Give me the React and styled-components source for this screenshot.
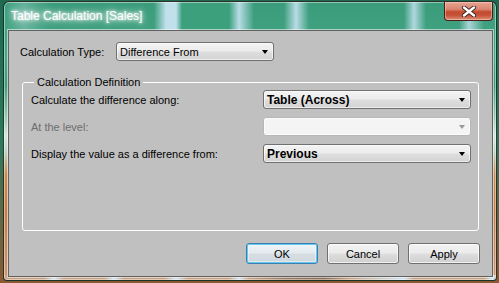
import React from 'react'
import styled, { createGlobalStyle } from 'styled-components'

const GlobalStyle = createGlobalStyle`
    html, body {
        margin: 0;
        padding: 0;
        width: 499px;
        height: 283px;
        overflow: hidden;
        background: #1f5a44;
        font-family: "Liberation Sans", Arial, sans-serif;
    }
`

function Dropdown({ value, bold, disabled, width }) {
    return (
        <Select disabled={disabled} width={width}>
            <SelectValue bold={bold}>{value}</SelectValue>
            <Arrow disabled={disabled} />
        </Select>
    )
}

function App() {
    return (
        <Desktop>
            <GlobalStyle />
            <Window>
                <TitleBar>
                    <Title>Table Calculation [Sales]</Title>
                    <CloseButton>
                        <svg width="16" height="11" viewBox="0 0 16 11">
                            <path d="M3 1.5 L13 9.5 M13 1.5 L3 9.5" stroke="#3a2420" strokeWidth="4.2" strokeLinecap="round" />
                            <path d="M3 1.5 L13 9.5 M13 1.5 L3 9.5" stroke="#ffffff" strokeWidth="2.4" strokeLinecap="round" />
                        </svg>
                    </CloseButton>
                </TitleBar>
                <Client>
                    <TypeRow>
                        <TypeLabel>Calculation Type:</TypeLabel>
                        <Dropdown value="Difference From" width={158} />
                    </TypeRow>
                    <GroupBox>
                        <Legend>Calculation Definition</Legend>
                        <FieldRow>
                            <Label>Calculate the difference along:</Label>
                            <Dropdown value="Table (Across)" bold width={208} />
                        </FieldRow>
                        <FieldRow>
                            <Label disabled>At the level:</Label>
                            <Dropdown value="" disabled width={208} />
                        </FieldRow>
                        <FieldRow>
                            <Label>Display the value as a difference from:</Label>
                            <Dropdown value="Previous" bold width={208} />
                        </FieldRow>
                    </GroupBox>
                    <ButtonBar>
                        <Button primary>OK</Button>
                        <Button>Cancel</Button>
                        <Button>Apply</Button>
                    </ButtonBar>
                </Client>
            </Window>
        </Desktop>
    )
}

export default App

const Desktop = styled.div`
    width: 499px;
    height: 283px;
    padding: 1px 2px 2px 3px;
    box-sizing: border-box;
    background: linear-gradient(to bottom, #1d6a4e 0%, #2a7a5c 50%, #8a5a30 100%);
`

const Window = styled.div`
    height: 100%;
    display: flex;
    flex-direction: column;
    box-sizing: border-box;
    padding: 0 3px 3px 4px;
    border: 1px solid rgba(20, 30, 30, 0.85);
    border-radius: 6px 6px 4px 4px;
    box-shadow: inset 0 0 0 1px rgba(255, 255, 255, 0.45);
    background:
        linear-gradient(to right,
            rgba(220, 240, 255, 0) 0px,
            rgba(220, 240, 255, 0.25) 20px,
            rgba(220, 240, 255, 0) 45px,
            rgba(220, 240, 255, 0) 150px,
            rgba(215, 235, 255, 0.85) 162px,
            rgba(215, 235, 255, 0.85) 172px,
            rgba(60, 160, 125, 0.9) 178px,
            rgba(60, 160, 125, 0.9) 225px,
            rgba(215, 235, 255, 0.8) 235px,
            rgba(220, 240, 255, 0) 250px,
            rgba(220, 240, 255, 0) 280px,
            rgba(215, 235, 255, 0.8) 292px,
            rgba(220, 240, 255, 0) 305px,
            rgba(220, 240, 255, 0) 400px,
            rgba(215, 235, 255, 0.75) 410px,
            rgba(220, 240, 255, 0) 422px,
            rgba(220, 240, 255, 0) 455px,
            rgba(215, 235, 255, 0.7) 465px,
            rgba(220, 240, 255, 0) 480px
        ) top left / 100% 30px no-repeat,
        linear-gradient(to right,
            #c6a080 0px, #c6a080 40px,
            #cfe4f4 50px, #c6a080 60px,
            #c6a080 100px, #cfe4f4 110px, #c6a080 120px,
            #c6a080 160px, #cfe4f4 172px, #c6a080 184px,
            #c6a080 225px, #cfe4f4 235px, #c6a080 245px,
            #9a7a60 280px, #8a6a55 320px, #c6a080 345px,
            #cfe4f4 400px, #c6a080 410px,
            #c6a080 480px, #cfe4f4 488px, #c6a080 496px
        ) bottom left / 100% 5px no-repeat,
        linear-gradient(to bottom,
            #3a9c7b 0%,
            #46a685 20%,
            #3f9a78 30%,
            #9ccab4 42%,
            #d4e6dc 48%,
            #b7d2bf 54%,
            #c98a52 62%,
            #c47c44 75%,
            #c99672 100%
        );
`

const TitleBar = styled.div`
    height: 28px;
    flex: none;
    display: flex;
    align-items: flex-start;
`

const Title = styled.div`
    padding: 7px 0 0 3px;
    font-family: "Liberation Sans", Arial, sans-serif;
    font-size: 12px;
    color: #ffffff;
    text-shadow:
        0 0 3px rgba(255, 255, 255, 1),
        0 0 6px rgba(255, 255, 255, 0.9),
        0 0 10px rgba(255, 255, 255, 0.7);
`

const CloseButton = styled.div`
    margin-left: auto;
    width: 47px;
    height: 18px;
    display: flex;
    align-items: center;
    justify-content: center;
    border: 1px solid #4a1e16;
    border-top: none;
    border-radius: 0 0 4px 4px;
    background: linear-gradient(to bottom,
        #e6a493 0%,
        #d98672 40%,
        #c34a2e 55%,
        #c6543a 75%,
        #e0927a 100%);
    box-shadow: inset 0 0 0 1px rgba(255, 220, 210, 0.45);
`

const Client = styled.div`
    flex: 1;
    display: flex;
    flex-direction: column;
    background: #c0c0c0;
    border: 1px solid #626262;
    box-shadow: 0 0 0 1px rgba(255, 255, 255, 0.55);
    font-size: 11px;
    color: #000000;
`

const TypeRow = styled.div`
    display: flex;
    align-items: center;
    padding: 11px 0 0 11px;
`

const TypeLabel = styled.div`
    width: 96px;
    font-size: 11px;
    white-space: nowrap;
`

const Label = styled.div`
    flex: 1;
    font-size: 11px;
    white-space: nowrap;
    color: ${props => props.disabled ? '#6d6d6d' : '#000000'};
`

const Select = styled.div`
    width: ${props => props.width}px;
    height: 19px;
    box-sizing: border-box;
    display: flex;
    align-items: center;
    padding: 0 5px 0 3px;
    border: 1px solid ${props => props.disabled ? '#b4b8bb' : '#707070'};
    border-radius: 3px;
    background: ${props => props.disabled
        ? '#f4f4f4'
        : 'linear-gradient(to bottom, #f3f3f3 0%, #ececec 45%, #dedede 55%, #d2d2d2 100%)'};
    box-shadow: inset 0 0 0 1px rgba(255, 255, 255, 0.6);
`

const SelectValue = styled.div`
    flex: 1;
    font-size: ${props => props.bold ? '12px' : '11px'};
    font-weight: ${props => props.bold ? 700 : 400};
    white-space: nowrap;
`

const Arrow = styled.div`
    width: 0;
    height: 0;
    border-left: 3.5px solid transparent;
    border-right: 3.5px solid transparent;
    border-top: 4px solid ${props => props.disabled ? '#9a9a9a' : '#000000'};
`

const GroupBox = styled.fieldset`
    margin: 16px 13px 0 13px;
    padding: 2px 7px 0 8px;
    height: 154px;
    box-sizing: border-box;
    border: 1px solid #ffffff;
    border-radius: 3px;
    display: flex;
    flex-direction: column;
    gap: 8px;
    min-width: 0;
`

const Legend = styled.legend`
    padding: 0 3px;
    margin-left: 3px;
    font-size: 11px;
    line-height: 11px;
`

const FieldRow = styled.div`
    display: flex;
    align-items: center;
`

const ButtonBar = styled.div`
    margin-top: auto;
    display: flex;
    justify-content: flex-end;
    gap: 9px;
    padding: 0 12px 12px 0;
`

const Button = styled.div`
    width: 72px;
    height: 21px;
    box-sizing: border-box;
    display: flex;
    align-items: center;
    justify-content: center;
    font-size: 11px;
    border: 1px solid ${props => props.primary ? '#3c7fb1' : '#707070'};
    border-radius: 3px;
    background: ${props => props.primary
        ? 'linear-gradient(to bottom, #eef3f6 0%, #e4ebef 45%, #d6dee3 55%, #cfd8dd 100%)'
        : 'linear-gradient(to bottom, #f2f2f2 0%, #ebebeb 45%, #dddddd 55%, #cfcfcf 100%)'};
    box-shadow: ${props => props.primary
        ? 'inset 0 0 0 1px #62c8f2, inset 0 0 0 2px rgba(255,255,255,0.4)'
        : 'inset 0 0 0 1px rgba(255, 255, 255, 0.7)'};
`
